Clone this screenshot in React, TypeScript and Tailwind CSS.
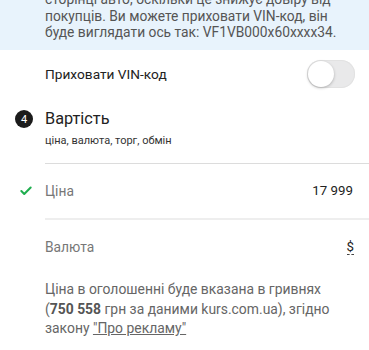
import { Check } from "lucide-react";

const font = { fontFamily: "Roboto, 'Noto Sans', sans-serif" };

function Toggle() {
  return (
    <div className="relative h-[28px] w-[48px] rounded-full bg-[#e9e9ea] shadow-[inset_0_0_0_1px_#e2e2e2]">
      <div className="absolute left-[1px] top-[1px] h-[26px] w-[26px] rounded-full bg-white shadow-[0_1px_3px_rgba(0,0,0,0.25)]" />
    </div>
  );
}

export default function App() {
  return (
    <div className="h-[350px] w-[369px] overflow-hidden bg-white" style={font}>
      <div className="h-[50px] overflow-hidden bg-[#e8f3fc] pl-[45px] pr-[10px]">
        <p className="-mt-[9px] whitespace-nowrap text-[13.8px] leading-[16.7px] text-[#555]">
          сторінці авто, оскільки це знижує довіру від
          <br />
          покупців. Ви можете приховати VIN-код, він
          <br />
          буде виглядати ось так: VF1VB000x60xxxx34.
        </p>
      </div>

      <div className="flex h-[48px] items-center justify-between pl-[45px] pr-[14px]">
        <span className="text-[13.7px] text-[#222]">Приховати VIN-код</span>
        <Toggle />
      </div>

      <div className="flex h-[65px] flex-col pt-[10px]">
        <div className="flex items-center">
          <div className="flex w-[45px] justify-center pl-[3px]">
            <span className="flex h-[18px] w-[18px] items-center justify-center rounded-full bg-[#1b1b1b] text-[11px] leading-none text-white">4</span>
          </div>
          <span className="text-[16.3px] leading-[22px] text-[#222]">Вартість</span>
        </div>
        <span className="mt-[4px] pl-[45px] text-[11px] leading-[14px] text-[#333]">ціна, валюта, торг, обмін</span>
      </div>

      <div className="ml-[45px] h-px bg-[#dcdcdc]" />

      <div className="flex h-[54px] items-center pr-[16px]">
        <div className="flex w-[45px] justify-center pl-[7px]">
          <Check className="h-[14px] w-[14px] text-[#1fae4f]" strokeWidth={3.5} />
        </div>
        <span className="flex-1 text-[13.8px] text-[#777]">Ціна</span>
        <span className="text-[13.3px] text-[#222]">17 999</span>
      </div>

      <div className="ml-[45px] h-[2px] bg-[#eeeeee]" />

      <div className="flex h-[54px] items-center pl-[45px] pr-[15px]">
        <span className="flex-1 text-[13.8px] text-[#777]">Валюта</span>
        <span className="border-b border-dashed border-[#444] text-[13.3px] leading-[15px] text-[#222]">$</span>
      </div>

      <p className="whitespace-nowrap pl-[45px] pr-[14px] pt-[6px] text-[13.9px] leading-[19.5px] text-[#666]">
        Ціна в оголошенні буде вказана в гривнях
        <br />
        (<b className="font-bold text-[#555]">750 558</b> грн за даними kurs.com.ua), згідно
        <br />
        закону <a className="underline">"Про рекламу"</a>
      </p>
    </div>
  );
}
